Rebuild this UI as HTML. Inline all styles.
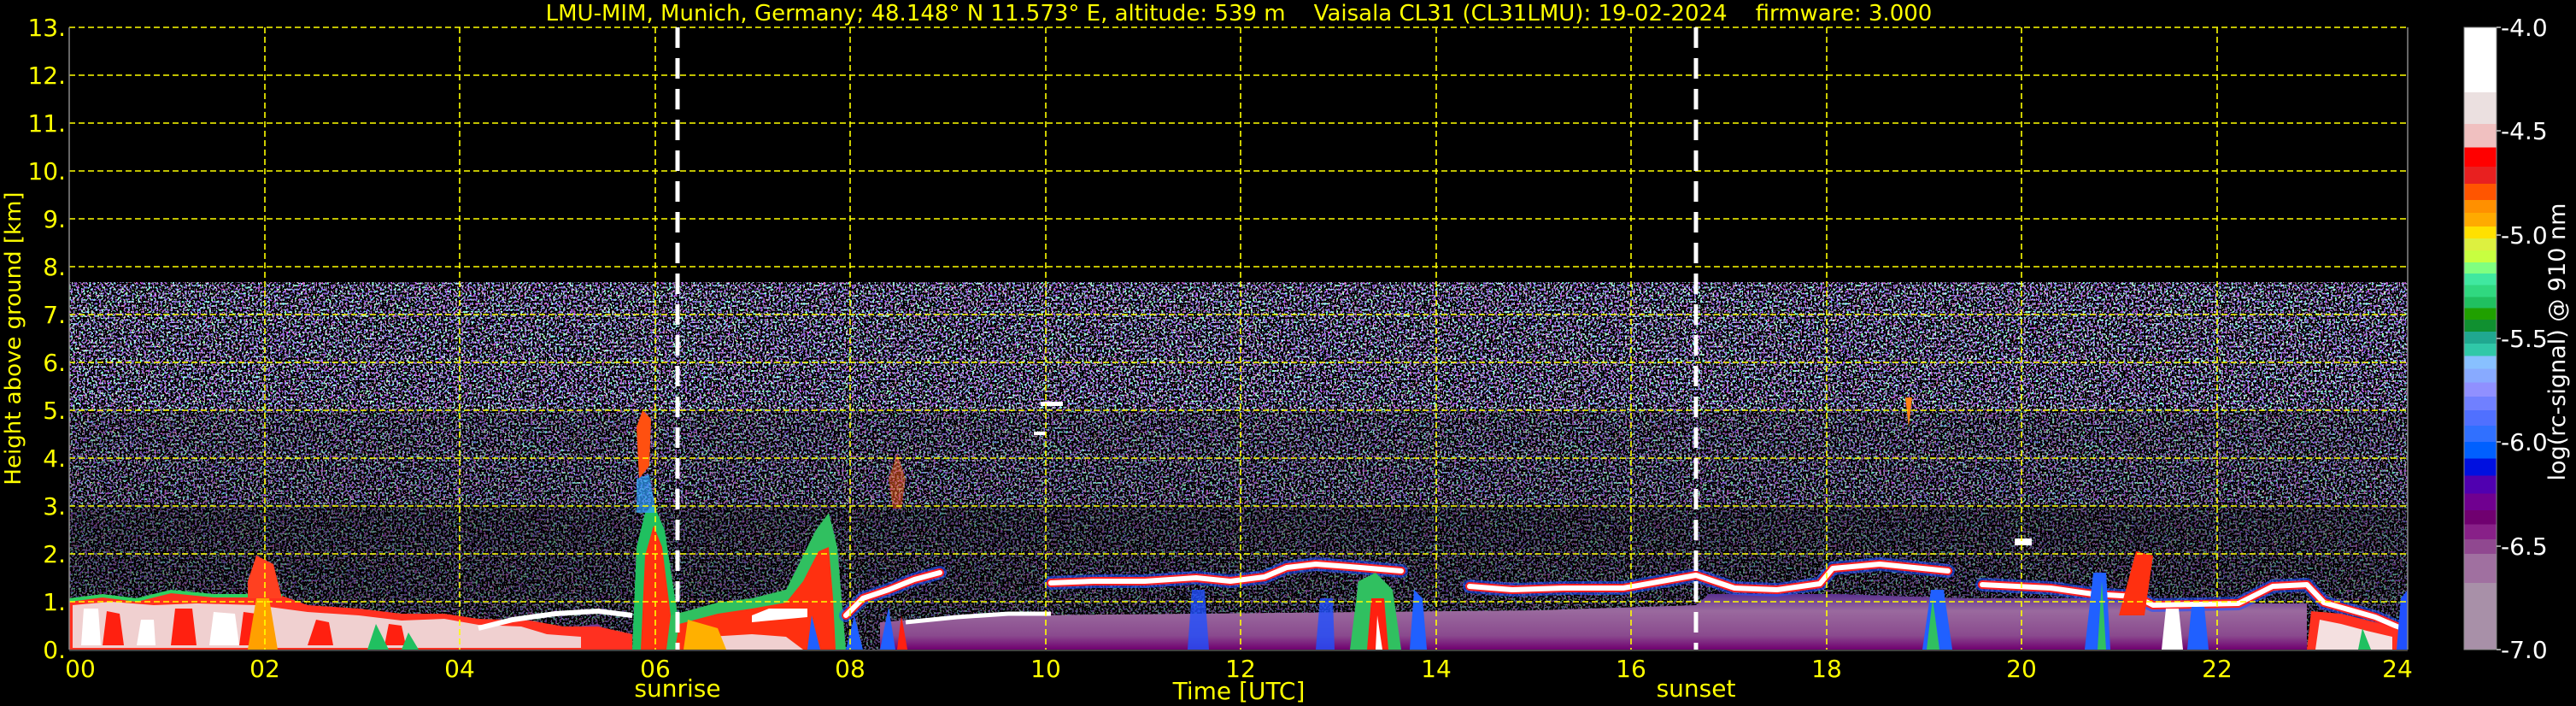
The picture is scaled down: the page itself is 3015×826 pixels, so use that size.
<!DOCTYPE html>
<html><head><meta charset="utf-8"><style>
html,body{margin:0;padding:0;background:#000;width:3015px;height:826px;overflow:hidden}
svg{display:block}
text{font-family:"DejaVu Sans","Liberation Sans",sans-serif}
</style></head><body>
<svg width="3015" height="826" viewBox="0 0 3015 826" xmlns="http://www.w3.org/2000/svg">
<defs>
<filter id="n" x="0" y="0" width="100%" height="100%" filterUnits="objectBoundingBox" color-interpolation-filters="sRGB">
<feTurbulence type="fractalNoise" baseFrequency="0.42" numOctaves="1" seed="7" result="t"/>
<feColorMatrix in="t" type="matrix" values="5 0 0 0 -2  0 5 0 0 -2  0 0 5 0 -2  0 0 0 7 -3.1" result="c"/>
<feComponentTransfer in="c">
<feFuncR type="discrete" tableValues="0.45 0.55 1 0.35 1 0.7 0.55"/>
<feFuncG type="discrete" tableValues="0.35 1 0.35 0.45 0.35 0.6 1"/>
<feFuncB type="discrete" tableValues="1 0.55 0.9 1 0.35 1 0.8"/>
<feFuncA type="discrete" tableValues="0 1"/>
</feComponentTransfer>
</filter>
<linearGradient id="cb" x1="0" y1="0" x2="0" y2="1">
<stop offset="0" stop-color="#fff"/><stop offset=".1047" stop-color="#fff"/>
<stop offset=".1047" stop-color="#ebe0e0"/><stop offset=".1552" stop-color="#ebe0e0"/>
<stop offset=".1552" stop-color="#f0c0c0"/><stop offset=".1928" stop-color="#f0c0c0"/>
<stop offset=".1928" stop-color="#ff0000"/><stop offset=".2238" stop-color="#ff0000"/>
<stop offset=".2238" stop-color="#e82020"/><stop offset=".2513" stop-color="#e82020"/>
<stop offset=".2513" stop-color="#ff5500"/><stop offset=".2773" stop-color="#ff5500"/>
<stop offset=".2773" stop-color="#ff9000"/><stop offset=".2982" stop-color="#ff9000"/>
<stop offset=".2982" stop-color="#ffaa00"/><stop offset=".3199" stop-color="#ffaa00"/>
<stop offset=".3199" stop-color="#ffe000"/><stop offset=".3394" stop-color="#ffe000"/>
<stop offset=".3394" stop-color="#ddf040"/><stop offset=".3588" stop-color="#ddf040"/>
<stop offset=".3588" stop-color="#c8ff40"/><stop offset=".3776" stop-color="#c8ff40"/>
<stop offset=".3776" stop-color="#80ff80"/><stop offset=".3957" stop-color="#80ff80"/>
<stop offset=".3957" stop-color="#40e8a0"/><stop offset=".4144" stop-color="#40e8a0"/>
<stop offset=".4144" stop-color="#30d880"/><stop offset=".4332" stop-color="#30d880"/>
<stop offset=".4332" stop-color="#20c060"/><stop offset=".4513" stop-color="#20c060"/>
<stop offset=".4513" stop-color="#20a000"/><stop offset=".47" stop-color="#20a000"/>
<stop offset=".47" stop-color="#109030"/><stop offset=".4888" stop-color="#109030"/>
<stop offset=".4888" stop-color="#20a890"/><stop offset=".5083" stop-color="#20a890"/>
<stop offset=".5083" stop-color="#30c8a8"/><stop offset=".5285" stop-color="#30c8a8"/>
<stop offset=".5285" stop-color="#88c0ff"/><stop offset=".5487" stop-color="#88c0ff"/>
<stop offset=".5487" stop-color="#88aaff"/><stop offset=".5704" stop-color="#88aaff"/>
<stop offset=".5704" stop-color="#9090ff"/><stop offset=".5935" stop-color="#9090ff"/>
<stop offset=".5935" stop-color="#7080ff"/><stop offset=".6152" stop-color="#7080ff"/>
<stop offset=".6152" stop-color="#5070ff"/><stop offset=".6404" stop-color="#5070ff"/>
<stop offset=".6404" stop-color="#3070ff"/><stop offset=".6664" stop-color="#3070ff"/>
<stop offset=".6664" stop-color="#0060ff"/><stop offset=".6931" stop-color="#0060ff"/>
<stop offset=".6931" stop-color="#0010e0"/><stop offset=".7206" stop-color="#0010e0"/>
<stop offset=".7206" stop-color="#5000b0"/><stop offset=".7495" stop-color="#5000b0"/>
<stop offset=".7495" stop-color="#700090"/><stop offset=".7762" stop-color="#700090"/>
<stop offset=".7762" stop-color="#700070"/><stop offset=".7986" stop-color="#700070"/>
<stop offset=".7986" stop-color="#882088"/><stop offset=".8231" stop-color="#882088"/>
<stop offset=".8231" stop-color="#904890"/><stop offset=".8462" stop-color="#904890"/>
<stop offset=".8462" stop-color="#a070a0"/><stop offset=".8931" stop-color="#a070a0"/>
<stop offset=".8931" stop-color="#a890a8"/><stop offset="1" stop-color="#a890a8"/>
</linearGradient>
<linearGradient id="pg" x1="0" y1="0" x2="0" y2="1">
<stop offset="0" stop-color="#5a3090"/><stop offset=".3" stop-color="#9a6a9e"/><stop offset=".75" stop-color="#8a4a8e"/><stop offset="1" stop-color="#700070"/>
</linearGradient>
</defs>

<rect x="81" y="330" width="2737" height="150" fill="#fff" filter="url(#n)" opacity="1"/>
<rect x="81" y="480" width="2737" height="110" fill="#fff" filter="url(#n)" opacity="0.8"/>
<rect x="81" y="590" width="2737" height="170" fill="#fff" filter="url(#n)" opacity="0.55"/>

<path d="M1030,760 L1030,728 L1100,722 L1200,720 L1400,718 L1600,716 L1800,714 L1985,708 L2000,695 L2150,695 L2300,700 L2450,700 L2510,706 L2700,706 L2700,760 Z" fill="url(#pg)"/>
<path d="M620,760 L620,740 L700,730 L740,760 Z" fill="#7a3a90"/>

<path d="M81,760 L81,702 L120,697 L160,702 L200,692 L250,697 L330,697 L360,708 L420,712 L470,718 L520,718 L560,724 L620,726 L660,733 L700,733 L740,742 L740,760 Z" fill="#ff3020"/>
<path d="M85,758 L85,708 L130,704 L180,708 L230,706 L300,708 L360,716 L420,720 L470,726 L520,724 L560,731 L610,733 L640,742 L680,745 L680,758 Z" fill="#f0d0d0"/>
<path d="M120,755 L125,715 L140,718 L145,755 Z M200,755 L205,712 L225,712 L230,755 Z M280,755 L285,716 L300,718 L305,755 Z M360,755 L370,725 L385,728 L390,755 Z M450,755 L455,730 L470,732 L475,755 Z" fill="#ff2010"/>
<path d="M245,755 L250,716 L275,718 L280,755 Z M160,755 L165,725 L180,725 L182,755 Z M95,755 L98,712 L115,712 L118,755 Z" fill="#fff"/>
<path d="M81,702 L120,697 L160,702 L200,692 L250,697 L330,697" fill="none" stroke="#30d060" stroke-width="4"/>
<path d="M290,680 L300,650 L320,660 L330,700 L290,700 Z" fill="#ff4020"/>
<path d="M290,760 L300,700 L315,700 L325,760 Z" fill="#ffa000"/>
<path d="M430,760 L440,730 L455,760 Z M470,760 L478,740 L490,760 Z" fill="#20c060"/>
<path d="M560,735 L600,725 L650,718 L700,715 L740,720" fill="none" stroke="#ffffff" stroke-width="6"/>

<path d="M740,760 L745,640 L755,600 L765,590 L778,620 L790,700 L800,760 Z" fill="#20c060"/>
<path d="M750,760 L755,650 L765,615 L775,640 L785,720 L790,760 Z" fill="#ff3010"/>
<path d="M745,500 L752,480 L762,490 L760,545 L748,560 Z" fill="#ff5010"/>
<path d="M745,560 L760,555 L768,600 L745,600 Z" fill="#30a0ff" opacity=".7"/>
<path d="M780,760 L785,720 L840,705 L880,700 L920,690 L935,660 L955,620 L970,600 L980,640 L985,700 L990,760 Z" fill="#30c060"/>
<path d="M790,760 L795,730 L840,718 L880,712 L920,705 L940,680 L958,645 L970,640 L975,700 L978,760 Z" fill="#ff3010"/>
<path d="M820,760 L830,745 L880,742 L920,745 L940,760 Z" fill="#f0d0d0"/>
<path d="M800,760 L805,725 L840,735 L850,760 Z" fill="#ffb000"/>
<path d="M880,720 L900,712 L945,712 L945,722 L880,728 Z" fill="#ffffff"/>
<path d="M945,760 L950,720 L960,760 Z M990,760 L1000,720 L1010,760 Z M1030,760 L1040,710 L1048,760 Z" fill="#2060ff"/>
<path d="M1050,760 L1055,720 L1062,760 Z" fill="#ff2010"/>

<g fill="none" stroke-linejoin="round" stroke-linecap="round">
<path d="M990,720 L1010,700 L1040,690 L1070,678 L1100,670 M1230,682 L1280,680 L1340,680 L1400,676 L1440,680 L1480,675 L1506,664 L1540,660 L1580,663 L1640,668 M1720,686 L1770,690 L1830,688 L1900,688 L1985,673 L2030,688 L2080,690 L2130,683 L2145,665 L2200,660 L2280,668 M2320,684 L2400,688 L2450,695 L2500,698 L2520,708 L2620,706 L2660,686 L2700,684 L2720,705 L2780,722 L2810,735" stroke="#2050ff" stroke-width="16" opacity=".6"/>
<path d="M990,720 L1010,700 L1040,690 L1070,678 L1100,670 M1230,682 L1280,680 L1340,680 L1400,676 L1440,680 L1480,675 L1506,664 L1540,660 L1580,663 L1640,668 M1720,686 L1770,690 L1830,688 L1900,688 L1985,673 L2030,688 L2080,690 L2130,683 L2145,665 L2200,660 L2280,668 M2320,684 L2400,688 L2450,695 L2500,698 L2520,708 L2620,706 L2660,686 L2700,684 L2720,705 L2780,722 L2810,735" stroke="#ff2020" stroke-width="10"/>
<path d="M990,720 L1010,700 L1040,690 L1070,678 L1100,670 M1230,682 L1280,680 L1340,680 L1400,676 L1440,680 L1480,675 L1506,664 L1540,660 L1580,663 L1640,668 M1720,686 L1770,690 L1830,688 L1900,688 L1985,673 L2030,688 L2080,690 L2130,683 L2145,665 L2200,660 L2280,668 M2320,684 L2400,688 L2450,695 L2500,698 L2520,708 L2620,706 L2660,686 L2700,684 L2720,705 L2780,722 L2810,735" stroke="#ffffff" stroke-width="6"/>
</g>
<path d="M1060,728 L1120,722 L1180,718 L1230,718" fill="none" stroke="#fff" stroke-width="5"/>
<path d="M1390,760 L1395,690 L1410,690 L1415,760 Z M1540,760 L1545,700 L1560,700 L1562,760 Z" fill="#2050ff" opacity=".8"/>
<path d="M1580,760 L1590,680 L1610,670 L1630,690 L1640,760 Z" fill="#30c060"/>
<path d="M1600,760 L1605,700 L1620,700 L1625,760 Z" fill="#ff2010"/>
<path d="M1610,760 L1612,720 L1618,760 Z" fill="#fff"/>
<path d="M1650,760 L1655,690 L1665,700 L1670,760 Z" fill="#2060ff"/>
<path d="M2250,760 L2260,690 L2275,690 L2285,760 Z M2440,760 L2450,670 L2465,670 L2470,760 Z M2560,760 L2565,710 L2580,710 L2585,760 Z" fill="#2060ff"/>
<path d="M2255,760 L2262,700 L2270,760 Z M2455,760 L2460,680 L2465,760 Z" fill="#30c060"/>
<path d="M2480,720 L2500,645 L2520,650 L2510,720 Z" fill="#ff3010"/>
<path d="M2530,760 L2535,712 L2550,712 L2555,760 Z" fill="#ffffff"/>
<path d="M2700,760 L2705,715 L2740,718 L2780,728 L2818,740 L2818,760 Z" fill="#ff3020"/>
<path d="M2710,760 L2715,725 L2740,730 L2770,738 L2800,745 L2800,760 Z" fill="#f4e0e0"/>
<path d="M2760,760 L2765,735 L2775,760 Z" fill="#20c060"/>
<path d="M2805,760 L2810,700 L2818,690 L2818,760 Z" fill="#2050ff"/>
<rect x="1218" y="470" width="26" height="5" fill="#fff"/>
<rect x="1210" y="505" width="14" height="4" fill="#fff"/>
<rect x="2358" y="630" width="20" height="8" fill="#fff"/>
<path d="M2230,465 L2234,500 L2238,465 Z" fill="#ff8010"/>
<path d="M1040,560 L1050,530 L1060,560 L1055,595 L1045,595 Z" fill="#ff6020" opacity=".5"/>

<g stroke="#ffff00" stroke-width="1.6" stroke-dasharray="7 4" fill="none">
<path d="M81,32H2818 M81,88H2818 M81,144H2818 M81,200H2818 M81,256H2818 M81,312H2818 M81,368H2818 M81,424H2818 M81,480H2818 M81,536H2818 M81,592H2818 M81,648H2818 M81,704H2818"/>
<path d="M310,32V760 M538,32V760 M767,32V760 M995,32V760 M1224,32V760 M1452,32V760 M1681,32V760 M1909,32V760 M2138,32V760 M2366,32V760 M2595,32V760"/>
</g>
<path d="M81,32V760 M2818,32V760" stroke="#888" stroke-width="1.5"/>
<path d="M81,761H2818" stroke="#555" stroke-width="1.5"/>
<path d="M793,32V760 M1985,32V760" stroke="#fff" stroke-width="5" stroke-dasharray="24 12"/>

<text x="1450" y="24" font-size="26" fill="#ffff00" text-anchor="middle" xml:space="preserve">LMU-MIM, Munich, Germany; 48.148° N 11.573° E, altitude: 539 m    Vaisala CL31 (CL31LMU): 19-02-2024    firmware: 3.000</text>

<g font-size="28" fill="#ffff00" text-anchor="end">
<text x="77" y="42">13.</text><text x="77" y="98">12.</text><text x="77" y="154">11.</text><text x="77" y="210">10.</text>
<text x="77" y="266">9.</text><text x="77" y="322">8.</text><text x="77" y="378">7.</text><text x="77" y="434">6.</text>
<text x="77" y="490">5.</text><text x="77" y="546">4.</text><text x="77" y="602">3.</text><text x="77" y="658">2.</text>
<text x="77" y="714">1.</text><text x="77" y="770">0.</text>
</g>
<text transform="translate(24,396) rotate(-90)" font-size="26" fill="#ffff00" text-anchor="middle">Height above ground [km]</text>
<g font-size="28" fill="#ffff00" text-anchor="middle">
<text x="94" y="792">00</text><text x="310" y="792">02</text><text x="538" y="792">04</text><text x="767" y="792">06</text>
<text x="995" y="792">08</text><text x="1224" y="792">10</text><text x="1452" y="792">12</text><text x="1681" y="792">14</text>
<text x="1909" y="792">16</text><text x="2138" y="792">18</text><text x="2366" y="792">20</text><text x="2595" y="792">22</text>
<text x="2806" y="792">24</text>
<text x="793" y="815">sunrise</text>
<text x="1985" y="815">sunset</text>
<text x="1450" y="818">Time [UTC]</text>
</g>

<rect x="2884" y="32" width="38" height="728" fill="url(#cb)" stroke="#888" stroke-width="1"/>
<g stroke="#ccc" stroke-width="1.5"><path d="M2922,32h5 M2922,153h5 M2922,275h5 M2922,396h5 M2922,517h5 M2922,639h5 M2922,760h5"/></g>
<g font-size="28" fill="#ffffff">
<text x="2927" y="42">-4.0</text><text x="2927" y="163">-4.5</text><text x="2927" y="285">-5.0</text>
<text x="2927" y="406">-5.5</text><text x="2927" y="527">-6.0</text><text x="2927" y="649">-6.5</text><text x="2927" y="770">-7.0</text>
</g>
<text transform="translate(3002,400) rotate(-90)" font-size="27" fill="#ffffff" text-anchor="middle">log(rc-signal) @ 910 nm</text>
</svg>
</body></html>
